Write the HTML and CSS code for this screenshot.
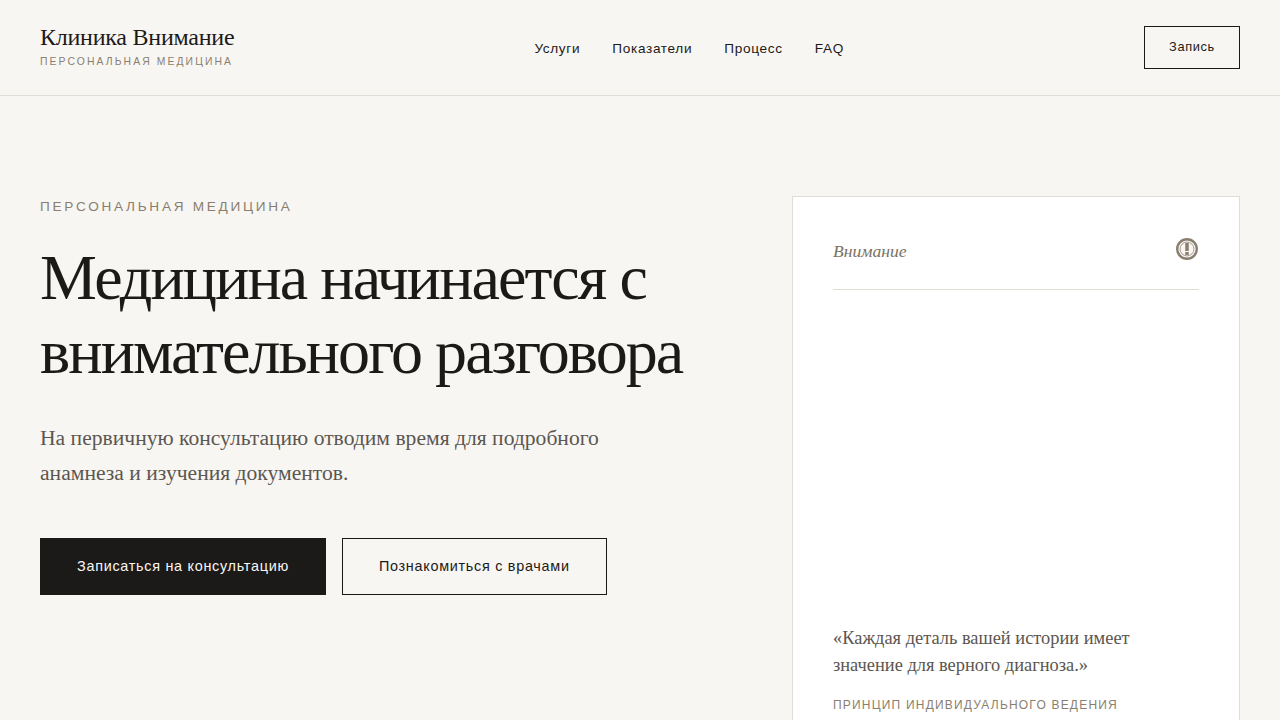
FILE: index.html
```html
<!DOCTYPE html>
<html lang="ru">
<head>
<meta charset="utf-8">
<title>Клиника Внимание</title>
<link rel="stylesheet" href="styles.css">
</head>
<body>
<header class="header">
  <div class="brand">
    <div class="brand-name">Клиника Внимание</div>
    <div class="brand-sub">ПЕРСОНАЛЬНАЯ МЕДИЦИНА</div>
  </div>
  <nav class="nav">
    <a href="#">Услуги</a>
    <a href="#">Показатели</a>
    <a href="#">Процесс</a>
    <a href="#">FAQ</a>
  </nav>
  <a class="header-btn" href="#">Запись</a>
</header>
<main class="hero">
  <section class="hero-left">
    <div class="eyebrow">ПЕРСОНАЛЬНАЯ МЕДИЦИНА</div>
    <h1 class="title">Медицина начинается с внимательного разговора</h1>
    <p class="lead">На первичную консультацию отводим время для подробного анамнеза и изучения документов.</p>
    <div class="actions">
      <a class="btn btn-dark" href="#">Записаться на консультацию</a>
      <a class="btn btn-light" href="#">Познакомиться с врачами</a>
    </div>
  </section>
  <aside class="card">
    <div class="card-head">
      <span class="card-label">Внимание</span>
      <svg class="card-icon" width="24" height="24" viewBox="0 0 24 24" fill="none">
        <circle cx="12" cy="12" r="9.8" stroke="#8a7f6e" stroke-width="2.4"/>
        <circle cx="12" cy="12" r="7" fill="#f8f6f3" stroke="#8a7f6e" stroke-width="0.8"/>
        <rect x="10.25" y="6" width="3.5" height="8" fill="#8a7f6e"/>
        <rect x="10.25" y="15" width="3.5" height="3" fill="#8a7f6e"/>
      </svg>
    </div>
    <div class="card-foot">
      <p class="quote">«Каждая деталь вашей истории имеет значение для верного диагноза.»</p>
      <div class="caption">ПРИНЦИП ИНДИВИДУАЛЬНОГО ВЕДЕНИЯ</div>
    </div>
  </aside>
</main>
</body>
</html>
```
FILE: styles.css
```css
* { box-sizing: border-box; }
html, body { margin: 0; height: 100%; }
body {
  background: #f8f6f3;
  color: #1c1a18;
  font-family: "Liberation Sans", Arial, sans-serif;
  overflow: hidden;
}
a { color: inherit; text-decoration: none; }
.header {
  height: 96px;
  padding: 0 40px;
  border-bottom: 1px solid #e0ddd6;
  display: flex;
  justify-content: space-between;
  align-items: center;
}
.brand { padding-bottom: 4px; }
.brand-name {
  font-family: "Liberation Serif", serif;
  font-size: 24px;
  line-height: 28px;
  letter-spacing: -0.24px;
}
.brand-sub {
  margin-top: 4px;
  font-size: 10.4px;
  line-height: 14px;
  letter-spacing: 2.08px;
  color: #8a7f6e;
}
.nav {
  display: flex;
  gap: 32px;
  padding-top: 2px;
  font-size: 13.6px;
  letter-spacing: 0.68px;
}
.header-btn {
  width: 96px;
  height: 43px;
  padding-bottom: 2px;
  border: 1px solid #1c1a18;
  display: flex;
  align-items: center;
  justify-content: center;
  font-size: 12.8px;
  letter-spacing: 0.64px;
}
.hero {
  display: grid;
  grid-template-columns: 1fr 448px;
  gap: 64px;
  padding: 100px 40px 0;
}
.eyebrow {
  margin-top: 3px;
  font-size: 13.6px;
  line-height: 16px;
  letter-spacing: 2.72px;
  color: #8a7f6e;
}
.title {
  margin: 26.4px 0 0;
  font-family: "Liberation Serif", serif;
  font-weight: 400;
  font-size: 64px;
  line-height: 73.6px;
  letter-spacing: -1.92px;
}
.lead {
  margin: 32px 0 0;
  max-width: 600px;
  font-family: "Liberation Serif", serif;
  font-size: 21.6px;
  line-height: 35px;
  color: #5c5650;
}
.actions {
  margin-top: 47px;
  display: flex;
  gap: 16px;
}
.btn {
  height: 57px;
  padding: 0 36px 1px;
  display: flex;
  align-items: center;
  font-size: 14.4px;
  letter-spacing: 0.72px;
  border: 1px solid #1c1a18;
}
.btn-dark { background: #1c1a18; color: #f8f6f3; }
.card {
  height: 640px;
  padding: 40px;
  background: #fff;
  border: 1px solid #e0ddd6;
  display: flex;
  flex-direction: column;
}
.card-head {
  display: flex;
  justify-content: space-between;
  align-items: flex-start;
  height: 53px;
  border-bottom: 1px solid #e0ddd6;
}
.card-label {
  margin-top: 3px;
  font-family: "Liberation Serif", serif;
  font-style: italic;
  font-size: 17.6px;
  line-height: 22px;
  color: #7a7263;
}
.card-foot { margin-top: 335px; }
.quote {
  margin: 0;
  font-family: "Liberation Serif", serif;
  font-size: 18.4px;
  line-height: 27px;
  color: #5c5650;
}
.caption {
  margin-top: 18px;
  font-size: 12px;
  line-height: 16px;
  letter-spacing: 1.2px;
  color: #8a7f6e;
}
```
